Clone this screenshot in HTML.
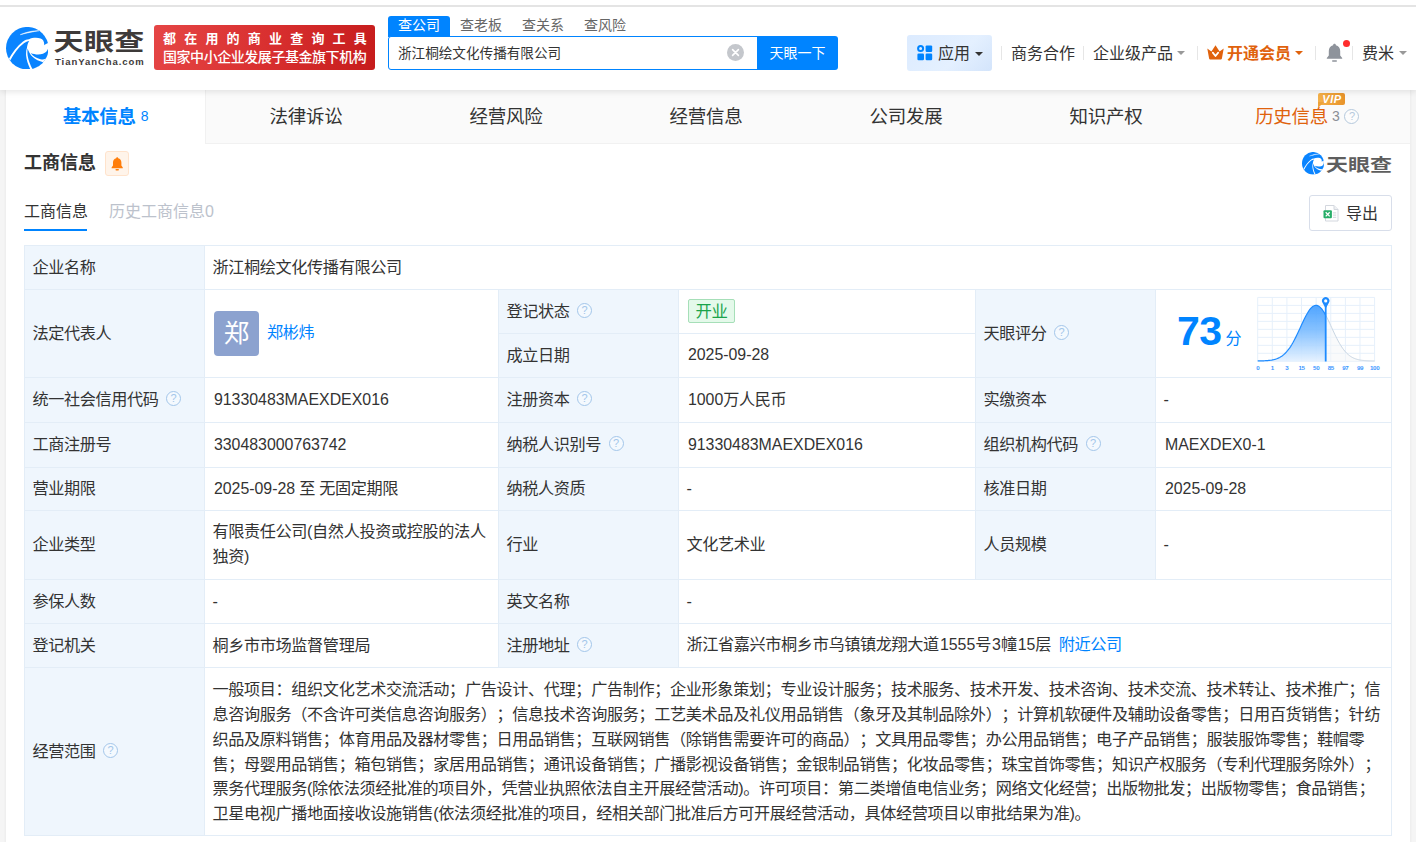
<!DOCTYPE html>
<html lang="zh-CN">
<head>
<meta charset="utf-8">
<title>浙江桐绘文化传播有限公司 - 天眼查</title>
<style>
*{box-sizing:border-box;margin:0;padding:0}
html,body{width:1416px;height:842px;overflow:hidden}
body{background:#f5f5f5;font-family:"Liberation Sans","Noto Sans CJK SC",sans-serif;color:#333;font-size:16px;position:relative}
a{text-decoration:none;color:#0084ff}
.abs{position:absolute}
/* top */
#topstrip{position:absolute;left:0;top:0;width:1416px;height:5px;background:#fff}
#topline{position:absolute;left:0;top:5px;width:1416px;height:2px;background:#e4e4e4;z-index:6}
#header{position:absolute;left:0;top:0;width:1416px;height:90px;background:#fff;box-shadow:0 2px 6px rgba(0,0,0,.10);z-index:5}

/* header pieces */
#logoTxt{position:absolute;left:53.5px;top:21.3px;font-size:30px;font-weight:bold;color:#3e3a39;line-height:42px;letter-spacing:.4px;transform-origin:0 50%;transform:scale(1,.805);white-space:nowrap}
#logoSub{position:absolute;left:55px;top:56.2px;font-size:9.5px;font-weight:bold;color:#3e3a39;letter-spacing:.95px;line-height:12px;white-space:nowrap}
#banner{position:absolute;left:154px;top:25px;width:221px;height:45px;border-radius:3px;background:linear-gradient(100deg,#e54545 0%,#d93030 50%,#c61c1c 100%);color:#fff;font-weight:bold;white-space:nowrap}
#banner .b1{position:absolute;left:9px;top:6px;font-size:13px;line-height:16px;letter-spacing:8.2px}
#banner .b2{position:absolute;left:9px;top:24.3px;font-size:14px;line-height:17px;letter-spacing:-.45px;font-weight:500}
.stab{position:absolute;top:16px;height:21px;line-height:19px;font-size:14px;color:#666;white-space:nowrap}
#stab1{left:388px;width:62px;background:#0084ff;color:#fff;text-align:center;border-radius:3px 3px 0 0}
#sbox{position:absolute;left:388px;top:36px;width:370px;height:34px;border:1px solid #0084ff;border-radius:3px 0 0 3px;background:#fff;font-size:13.6px;line-height:34px;padding-left:9px;color:#333;white-space:nowrap}
#sbtn{position:absolute;left:757px;top:36px;width:81px;height:34px;background:#0084ff;color:#fff;font-size:14px;line-height:35px;text-align:center;border-radius:0 3px 3px 0}
#sclr{position:absolute;left:727px;top:44px;width:17px;height:17px;border-radius:50%;background:#c4c7cc}
.hn{position:absolute;top:42px;height:24px;line-height:24px;font-size:16px;color:#333;white-space:nowrap}
.hsep{position:absolute;top:46px;width:1px;height:14px;background:#e6e6e6}
.car{position:absolute;width:0;height:0;border-left:4.5px solid transparent;border-right:4.5px solid transparent;border-top:4.5px solid #999}
#app{position:absolute;left:907px;top:35px;width:85px;height:36px;border-radius:3px;background:linear-gradient(135deg,#dcebff 0%,#e4f0ff 60%,#d3e4fb 100%)}
/* container */
#wrap{position:absolute;left:6px;top:90px;width:1404px;height:760px;background:#fff;box-shadow:0 0 3px rgba(0,0,0,.07)}
#nav{position:absolute;left:0;top:0;width:1404px;height:54px;background:#fafafa;border-bottom:1px solid #f1f1f1}
.nt{position:absolute;top:0;height:54px;line-height:53.5px;font-size:18.5px;letter-spacing:-.3px;color:#333;text-align:center;white-space:nowrap}
.nt.on{background:#fff;color:#0084ff;font-weight:bold;border-right:1px solid #f1f1f1}

#vip{position:absolute;left:1312px;top:3px;width:27px;height:12px;border-radius:2px;background:linear-gradient(90deg,#f4b14a,#e8932a);color:#fff;font:italic bold 11px/12px "Liberation Sans",sans-serif;text-align:center;letter-spacing:.6px;text-indent:1px}
#vip:after{content:"";position:absolute;left:0;top:9px;border-top:6px solid #eda23a;border-right:6px solid transparent}
#stitle{position:absolute;left:18px;top:61px;font-size:18px;font-weight:bold;color:#333;line-height:24px;white-space:nowrap}
#sbell{position:absolute;left:99px;top:61px;width:24px;height:25px;border:1px solid #ffe3cc;background:#fff4ea;border-radius:3px}
.sub{position:absolute;top:110px;font-size:16px;line-height:24px;white-space:nowrap}
#subline{position:absolute;left:18px;top:138.5px;width:63px;height:2px;background:#0084ff}
#exp{position:absolute;left:1303px;top:105px;width:83px;height:36px;border:1px solid #d8deea;border-radius:3px;background:#fff}
#exp span{position:absolute;left:36px;top:6px;font-size:16px;line-height:24px;color:#333}
#wm{position:absolute;left:1320px;top:62.5px;font-size:22px;font-weight:bold;color:#5e5e5e;line-height:24px;white-space:nowrap;transform-origin:0 50%;transform:scale(1,.8)}
/* table */
#tb{position:absolute;left:18px;top:155px;width:1368px;height:591px;border-top:1px solid #e3edf7;border-left:1px solid #e3edf7}
.c{position:absolute;border-right:1px solid #e3edf7;border-bottom:1px solid #e3edf7;background:#fff;font-size:16.15px;letter-spacing:-.36px;color:#333;padding-left:7.4px;padding-bottom:2px;line-height:24px;text-spacing-trim:space-all;display:flex;align-items:center;white-space:nowrap}
.c.l{background:#eff6fd}
.q{display:inline-block;width:15px;height:15px;border:1px solid #a3c6ea;border-radius:50%;margin-left:7.5px;font-size:11px;line-height:13px;text-align:center;color:#a3c6ea;background:rgba(255,255,255,.35);font-family:"Liberation Sans",sans-serif;letter-spacing:0;vertical-align:middle;position:relative;top:-2px}

.n{font-size:15.9px;letter-spacing:0;margin-left:1.5px}
.m1{margin-left:1px}
.av{position:absolute;left:9px;top:21px;width:45px;height:45px;border-radius:4px;background:#8ca2cf;color:#fff;font-size:25.5px;line-height:45px;text-align:center;letter-spacing:0}
.nm{position:absolute;left:62px;top:30px;color:#0084ff;line-height:24px}
.tag{display:inline-block;height:24px;line-height:22px;padding:0 6.5px 0 6.5px;border:1px solid #a6dfb8;background:#e4f9ea;color:#1aa34a;border-radius:2px;font-size:16.4px;letter-spacing:-.3px;margin-left:1.6px;position:relative;top:.5px}
.ml{display:block;line-height:24.8px;white-space:nowrap}
.sc{padding-top:9.3px}
</style>
</head>
<body>
<div id="topstrip"></div>
<div id="topline"></div>
<div id="header">
  <svg class="abs" style="left:5.7px;top:26.7px" width="42.5" height="42.5" viewBox="0 0 42.5 42.5"><defs><clipPath id="lgc"><circle cx="21.25" cy="21.2" r="21.25"/></clipPath></defs>
<g clip-path="url(#lgc)">
<rect x="0" y="0" width="43" height="43" fill="#0a84ff"/>
<path d="M14.3 7.7 C20 5 27 3.6 33 3.7 C27.5 4.6 20.5 6 14.3 7.7Z" fill="#fff" stroke="#fff" stroke-width=".5" stroke-linejoin="round"/>
<path d="M2.6 32.2 C6.5 25 11 19 17 14.4 C19 12.9 21 12.4 23 12.2 C26 10.8 31 10.4 34.6 11.5 C37.2 12.5 38.6 15 38.1 18.3 L39.5 17.2 L44 15 L44 44 L25.2 44 C22.8 39.5 20.6 34 20.1 28.5 C19.9 25.5 20.2 23 20.9 21 C21.2 18.5 21.9 16 23.2 14 C21.5 14.3 19.5 15 17.9 16.2 C12 20.6 8 26.5 4.2 33.4Z" fill="#fff"/>
<path d="M42.3 19.6 C42.3 23 40.5 25.6 37 26.8 C33 28 28.5 27.6 24.6 26 C27 29.2 30.5 31.4 34.5 32.2 C37 32.7 39 32.4 41 31.6 L44 30 L44 19Z" fill="#0a84ff"/>
<path d="M21.6 21.4 C22.6 24.5 24.2 27.6 26.8 30 C29.6 32.6 33 34.2 37.2 35.2 L38 37 L30 44 L27 43 C24.6 39 22.6 34 21.7 29 C21.3 26.4 21.3 24 21.6 21.4Z" fill="#0a84ff"/>
</g>
</svg>
  <div id="logoTxt">天眼查</div>
  <div id="logoSub">TianYanCha.com</div>
  <div id="banner"><div class="b1">都在用的商业查询工具</div><div class="b2">国家中小企业发展子基金旗下机构</div></div>
  <div class="stab" id="stab1">查公司</div>
  <div class="stab" style="left:460px">查老板</div>
  <div class="stab" style="left:522px">查关系</div>
  <div class="stab" style="left:584px">查风险</div>
  <div id="sbox">浙江桐绘文化传播有限公司</div>
  <div id="sclr"><svg width="17" height="17" viewBox="0 0 17 17"><path d="M5.6 5.6 L11.4 11.4 M11.4 5.6 L5.6 11.4" stroke="#fff" stroke-width="1.6" stroke-linecap="round"/></svg></div>
  <div id="sbtn">天眼一下</div>
  <div id="app"></div>
  <svg class="abs" style="left:917px;top:45px" width="16" height="16" viewBox="0 0 16 16"><circle cx="3.6" cy="3.6" r="2.5" fill="none" stroke="#0084ff" stroke-width="2"/><rect x="8.6" y=".4" width="6.6" height="6.6" rx="1.2" fill="#0084ff"/><rect x=".4" y="8.6" width="6.6" height="6.6" rx="1.2" fill="#0084ff"/><rect x="8.6" y="8.6" width="6.6" height="6.6" rx="1.2" fill="#0084ff"/></svg>
  <div class="hn" style="left:938px">应用</div>
  <div class="car" style="left:974.5px;top:51.5px;border-top-color:#333"></div>
  <div class="hsep" style="left:1001px"></div>
  <div class="hn" style="left:1011px">商务合作</div>
  <div class="hsep" style="left:1083px"></div>
  <div class="hn" style="left:1093px">企业级产品</div>
  <div class="car" style="left:1177px;top:50.5px"></div>
  <div class="hsep" style="left:1197px"></div>
  <svg class="abs" style="left:1207px;top:45px" width="17" height="15" viewBox="0 0 17 15"><path d="M.3 3.6 L4.4 6.4 L8.5 .2 L12.6 6.4 L16.7 3.6 L15 13 C14.9 14 14.2 14.6 13.3 14.6 L3.7 14.6 C2.8 14.6 2.1 14 2 13Z" fill="#e0620d"/><path d="M5.8 7.6 L8.5 11 L11.2 7.6" fill="none" stroke="#fff" stroke-width="1.7" stroke-linecap="round" stroke-linejoin="round"/></svg>
  <div class="hn" style="left:1227px;color:#e0620d;font-weight:bold">开通会员</div>
  <div class="car" style="left:1295px;top:50.5px;border-top-color:#e0620d"></div>
  <div class="hsep" style="left:1315px"></div>
  <svg class="abs" style="left:1326px;top:43px" width="17" height="20" viewBox="0 0 17 20"><path d="M8.5 .8 C9.3 .8 9.9 1.4 9.9 2.2 C12.6 2.9 14.2 5.2 14.2 8 L14.2 12.4 L16.2 15 L16.2 15.8 L.8 15.8 L.8 15 L2.8 12.4 L2.8 8 C2.8 5.2 4.4 2.9 7.1 2.2 C7.1 1.4 7.7 .8 8.5 .8Z" fill="#8e939b"/><rect x="6" y="17.2" width="5" height="1.6" rx=".8" fill="#8e939b"/></svg>
  <div class="abs" style="left:1342.8px;top:39.5px;width:7px;height:7px;border-radius:50%;background:#ff2d2d"></div>
  <div class="hsep" style="left:1352px"></div>
  <div class="hn" style="left:1362px">费米</div>
  <div class="car" style="left:1399px;top:50.5px"></div>
</div>
<div id="wrap">
  <div id="nav">
    <div class="nt on" style="left:0;width:200px">基本信息<span style="font-weight:normal;font-size:14px;margin-left:5px;position:relative;top:-2px">8</span></div>
    <div class="nt" style="left:200px;width:200px">法律诉讼</div>
    <div class="nt" style="left:400px;width:200px">经营风险</div>
    <div class="nt" style="left:600px;width:200px">经营信息</div>
    <div class="nt" style="left:800px;width:200px">公司发展</div>
    <div class="nt" style="left:1000px;width:200px">知识产权</div>
    <div class="nt" style="left:1201.3px;width:200px;color:#e0620d">历史信息<span style="font-size:14px;color:#8a8f96;margin-left:4px;position:relative;top:-2px">3</span><span class="q" style="width:15px;height:15px;margin-left:5px;position:relative;top:-2px;border-color:#b5c9dd;color:#b5c9dd;line-height:13px">?</span></div>
    <div id="vip">VIP</div>
  </div>
  <div id="sec">
    <div id="stitle">工商信息</div>
    <div id="sbell"><svg class="abs" style="left:5px;top:4.5px" width="12.4" height="14" viewBox="0 0 11 13"><path d="M5.5 .3 C6 .3 6.4 .7 6.4 1.2 C8.3 1.7 9.4 3.3 9.4 5.2 L9.4 8 L10.7 9.8 L10.7 10.4 L.3 10.4 L.3 9.8 L1.6 8 L1.6 5.2 C1.6 3.3 2.7 1.7 4.6 1.2 C4.6 .7 5 .3 5.5 .3Z" fill="#ff7d0a"/><rect x="3.9" y="11.2" width="3.2" height="1.3" rx=".65" fill="#ff7d0a"/></svg></div>
    <svg class="abs" style="left:1296px;top:62px" width="22" height="22.6" viewBox="0 0 42.5 42.5" preserveAspectRatio="none"><defs><clipPath id="lgc2"><circle cx="21.25" cy="21.2" r="21.25"/></clipPath></defs>
<g clip-path="url(#lgc2)">
<rect x="0" y="0" width="43" height="43" fill="#0a84ff"/>
<path d="M14.3 7.7 C20 5 27 3.6 33 3.7 C27.5 4.6 20.5 6 14.3 7.7Z" fill="#fff" stroke="#fff" stroke-width=".5" stroke-linejoin="round"/>
<path d="M2.6 32.2 C6.5 25 11 19 17 14.4 C19 12.9 21 12.4 23 12.2 C26 10.8 31 10.4 34.6 11.5 C37.2 12.5 38.6 15 38.1 18.3 L39.5 17.2 L44 15 L44 44 L25.2 44 C22.8 39.5 20.6 34 20.1 28.5 C19.9 25.5 20.2 23 20.9 21 C21.2 18.5 21.9 16 23.2 14 C21.5 14.3 19.5 15 17.9 16.2 C12 20.6 8 26.5 4.2 33.4Z" fill="#fff"/>
<path d="M42.3 19.6 C42.3 23 40.5 25.6 37 26.8 C33 28 28.5 27.6 24.6 26 C27 29.2 30.5 31.4 34.5 32.2 C37 32.7 39 32.4 41 31.6 L44 30 L44 19Z" fill="#0a84ff"/>
<path d="M21.6 21.4 C22.6 24.5 24.2 27.6 26.8 30 C29.6 32.6 33 34.2 37.2 35.2 L38 37 L30 44 L27 43 C24.6 39 22.6 34 21.7 29 C21.3 26.4 21.3 24 21.6 21.4Z" fill="#0a84ff"/>
</g>
</svg>
    <div id="wm">天眼查</div>
    <div class="sub" style="left:18px;color:#333">工商信息</div>
    <div class="sub" style="left:103px;color:#bcc2cc">历史工商信息0</div>
    <div id="subline"></div>
    <div id="exp"><svg class="abs" style="left:13px;top:9px" width="16" height="17" viewBox="0 0 16 17"><path d="M2.5 .5 L11 .5 L15 4.5 L15 16 L2.5 16Z" fill="#fff" stroke="#d3d7de" stroke-width="1"/><path d="M11 .5 L11 4.5 L15 4.5" fill="#eef0f3" stroke="#d3d7de" stroke-width="1"/><rect x="10" y="7.4" width="3.2" height="1" fill="#cfd4da"/><rect x="10" y="9.6" width="3.2" height="1" fill="#cfd4da"/><rect x="10" y="11.8" width="3.2" height="1" fill="#cfd4da"/><rect x=".5" y="5.3" width="8.4" height="8" rx="1" fill="#27ae68"/><path d="M2.7 7.2 L6.7 11.4 M6.7 7.2 L2.7 11.4" stroke="#fff" stroke-width="1.3"/></svg><span>导出</span></div>
  </div>
  <div id="tb">
<div class="c l" style="left:0px;top:0px;width:180px;height:44px;"><span class="t">企业名称</span></div>
<div class="c " style="left:180px;top:0px;width:1187px;height:44px;"><span class="t">浙江桐绘文化传播有限公司</span></div>
<div class="c l" style="left:0px;top:44px;width:180px;height:88px;"><span class="t">法定代表人</span></div>
<div class="c " style="left:180px;top:44px;width:294px;height:88px;"><span class="av">郑</span><a class="nm">郑彬炜</a></div>
<div class="c l" style="left:474px;top:44px;width:180px;height:44px;"><span class="t">登记状态<span class="q">?</span></span></div>
<div class="c " style="left:654px;top:44px;width:297px;height:44px;"><span class="t"><span class="tag">开业</span></span></div>
<div class="c l" style="left:474px;top:88px;width:180px;height:44px;"><span class="t">成立日期</span></div>
<div class="c " style="left:654px;top:88px;width:297px;height:44px;"><span class="t"><span class="n">2025-09-28</span></span></div>
<div class="c l" style="left:951px;top:44px;width:180px;height:88px;"><span class="t">天眼评分<span class="q">?</span></span></div>
<div class="c " style="left:1131px;top:44px;width:236px;height:88px;padding:0"><svg class="abs" style="left:0;top:0" width="236" height="87" viewBox="0 0 236 87">
<defs><linearGradient id="bg1" x1="0" y1="0" x2="0" y2="1"><stop offset="0" stop-color="#3d9bff"/><stop offset=".45" stop-color="#7bbcff"/><stop offset="1" stop-color="#e4f1ff"/></linearGradient></defs>
<g stroke="#e6f0fb" stroke-width="1"><line x1="101.7" y1="7.4" x2="101.7" y2="71.3"/><line x1="116.31" y1="7.4" x2="116.31" y2="71.3"/><line x1="130.92" y1="7.4" x2="130.92" y2="71.3"/><line x1="145.54" y1="7.4" x2="145.54" y2="71.3"/><line x1="160.15" y1="7.4" x2="160.15" y2="71.3"/><line x1="174.76" y1="7.4" x2="174.76" y2="71.3"/><line x1="189.38" y1="7.4" x2="189.38" y2="71.3"/><line x1="203.99" y1="7.4" x2="203.99" y2="71.3"/><line x1="218.6" y1="7.4" x2="218.6" y2="71.3"/><line x1="101.7" y1="7.4" x2="218.6" y2="7.4"/><line x1="101.7" y1="15.39" x2="218.6" y2="15.39"/><line x1="101.7" y1="23.38" x2="218.6" y2="23.38"/><line x1="101.7" y1="31.36" x2="218.6" y2="31.36"/><line x1="101.7" y1="39.35" x2="218.6" y2="39.35"/><line x1="101.7" y1="47.34" x2="218.6" y2="47.34"/><line x1="101.7" y1="55.32" x2="218.6" y2="55.32"/><line x1="101.7" y1="63.31" x2="218.6" y2="63.31"/><line x1="101.7" y1="71.3" x2="218.6" y2="71.3"/></g>
<path d="M169.7 25.21 L170.7 27.11 L171.7 29.11 L172.7 31.18 L173.7 33.31 L174.7 35.47 L175.7 37.65 L176.7 39.83 L177.7 41.98 L178.7 44.1 L179.7 46.16 L180.7 48.17 L181.7 50.1 L182.7 51.94 L183.7 53.69 L184.7 55.35 L185.7 56.91 L186.7 58.37 L187.7 59.72 L188.7 60.97 L189.7 62.12 L190.7 63.17 L191.7 64.12 L192.7 64.98 L193.7 65.76 L194.7 66.45 L195.7 67.07 L196.7 67.62 L197.7 68.11 L198.7 68.53 L199.7 68.9 L200.7 69.23 L201.7 69.51 L202.7 69.75 L203.7 69.95 L204.7 70.13 L205.7 70.28 L206.7 70.4 L207.7 70.51 L208.7 70.6 L209.7 70.67 L210.7 70.74 L211.7 70.79 L212.7 70.83 L213.7 70.86 L214.7 70.89 L215.7 70.91 L216.7 70.93 L217.7 70.95 L218.6 70.96 L218.6 71.5 L169.7 71.5Z" fill="#f4f6f8" opacity=".5"/>
<path d="M169.7 25.21 L170.7 27.11 L171.7 29.11 L172.7 31.18 L173.7 33.31 L174.7 35.47 L175.7 37.65 L176.7 39.83 L177.7 41.98 L178.7 44.1 L179.7 46.16 L180.7 48.17 L181.7 50.1 L182.7 51.94 L183.7 53.69 L184.7 55.35 L185.7 56.91 L186.7 58.37 L187.7 59.72 L188.7 60.97 L189.7 62.12 L190.7 63.17 L191.7 64.12 L192.7 64.98 L193.7 65.76 L194.7 66.45 L195.7 67.07 L196.7 67.62 L197.7 68.11 L198.7 68.53 L199.7 68.9 L200.7 69.23 L201.7 69.51 L202.7 69.75 L203.7 69.95 L204.7 70.13 L205.7 70.28 L206.7 70.4 L207.7 70.51 L208.7 70.6 L209.7 70.67 L210.7 70.74 L211.7 70.79 L212.7 70.83 L213.7 70.86 L214.7 70.89 L215.7 70.91 L216.7 70.93 L217.7 70.95 L218.6 70.96" fill="none" stroke="#c9d6e3" stroke-width="1"/>
<path d="M101.7 70.95 L102.7 70.94 L103.7 70.92 L104.7 70.9 L105.7 70.88 L106.7 70.85 L107.7 70.81 L108.7 70.77 L109.7 70.71 L110.7 70.65 L111.7 70.57 L112.7 70.47 L113.7 70.36 L114.7 70.22 L115.7 70.06 L116.7 69.87 L117.7 69.66 L118.7 69.4 L119.7 69.1 L120.7 68.76 L121.7 68.37 L122.7 67.92 L123.7 67.41 L124.7 66.84 L125.7 66.19 L126.7 65.46 L127.7 64.65 L128.7 63.75 L129.7 62.76 L130.7 61.67 L131.7 60.48 L132.7 59.19 L133.7 57.8 L134.7 56.3 L135.7 54.7 L136.7 53.0 L137.7 51.21 L138.7 49.33 L139.7 47.37 L140.7 45.34 L141.7 43.26 L142.7 41.12 L143.7 38.96 L144.7 36.78 L145.7 34.61 L146.7 32.45 L147.7 30.35 L148.7 28.3 L149.7 26.34 L150.7 24.48 L151.7 22.74 L152.7 21.15 L153.7 19.72 L154.7 18.46 L155.7 17.4 L156.7 16.55 L157.7 15.91 L158.7 15.5 L159.7 15.31 L160.7 15.36 L161.7 15.63 L162.7 16.14 L163.7 16.86 L164.7 17.8 L165.7 18.94 L166.7 20.27 L167.7 21.77 L168.7 23.42 L169.7 25.21 L169.7 71.5 L101.7 71.5Z" fill="url(#bg1)" fill-opacity=".9"/>
<path d="M101.7 70.95 L102.7 70.94 L103.7 70.92 L104.7 70.9 L105.7 70.88 L106.7 70.85 L107.7 70.81 L108.7 70.77 L109.7 70.71 L110.7 70.65 L111.7 70.57 L112.7 70.47 L113.7 70.36 L114.7 70.22 L115.7 70.06 L116.7 69.87 L117.7 69.66 L118.7 69.4 L119.7 69.1 L120.7 68.76 L121.7 68.37 L122.7 67.92 L123.7 67.41 L124.7 66.84 L125.7 66.19 L126.7 65.46 L127.7 64.65 L128.7 63.75 L129.7 62.76 L130.7 61.67 L131.7 60.48 L132.7 59.19 L133.7 57.8 L134.7 56.3 L135.7 54.7 L136.7 53.0 L137.7 51.21 L138.7 49.33 L139.7 47.37 L140.7 45.34 L141.7 43.26 L142.7 41.12 L143.7 38.96 L144.7 36.78 L145.7 34.61 L146.7 32.45 L147.7 30.35 L148.7 28.3 L149.7 26.34 L150.7 24.48 L151.7 22.74 L152.7 21.15 L153.7 19.72 L154.7 18.46 L155.7 17.4 L156.7 16.55 L157.7 15.91 L158.7 15.5 L159.7 15.31 L160.7 15.36 L161.7 15.63 L162.7 16.14 L163.7 16.86 L164.7 17.8 L165.7 18.94 L166.7 20.27 L167.7 21.77 L168.7 23.42 L169.7 25.21" fill="none" stroke="#1e8bff" stroke-width="1.2"/>
<line x1="169.7" y1="16" x2="169.7" y2="71.5" stroke="#1e8bff" stroke-width="1.8"/>
<path d="M169.7 18.5 L166.5 12.8 A3.7 3.7 0 1 1 172.9 12.8Z" fill="#1e8bff"/>
<circle cx="169.7" cy="10.9" r="1.6" fill="#fff"/>
<g font-family="Liberation Sans, sans-serif" font-size="6.2" font-weight="bold" fill="#3d97ff"><text x="101.7" y="80" text-anchor="middle">0</text><text x="116.31" y="80" text-anchor="middle">1</text><text x="130.92" y="80" text-anchor="middle">3</text><text x="145.54" y="80" text-anchor="middle">15</text><text x="160.15" y="80" text-anchor="middle">50</text><text x="174.76" y="80" text-anchor="middle">85</text><text x="189.38" y="80" text-anchor="middle">97</text><text x="203.99" y="80" text-anchor="middle">99</text><text x="218.6" y="80" text-anchor="middle">100</text></g>
</svg>
<div class="abs" style="left:21px;top:17px;font:bold 41px/48px 'Liberation Sans',sans-serif;color:#0084ff;letter-spacing:-.5px">73</div>
<div class="abs" style="left:69.5px;top:37px;font-size:16px;line-height:24px;color:#0084ff;letter-spacing:0">分</div></div>
<div class="c l" style="left:0px;top:132px;width:180px;height:45px;"><span class="t">统一社会信用代码<span class="q">?</span></span></div>
<div class="c " style="left:180px;top:132px;width:294px;height:45px;"><span class="t"><span class="n">91330483MAEXDEX016</span></span></div>
<div class="c l" style="left:474px;top:132px;width:180px;height:45px;"><span class="t">注册资本<span class="q">?</span></span></div>
<div class="c " style="left:654px;top:132px;width:297px;height:45px;"><span class="t"><span class="n">1000</span>万人民币</span></div>
<div class="c l" style="left:951px;top:132px;width:180px;height:45px;"><span class="t">实缴资本</span></div>
<div class="c " style="left:1131px;top:132px;width:236px;height:45px;"><span class="t">-</span></div>
<div class="c l" style="left:0px;top:177px;width:180px;height:45px;"><span class="t">工商注册号</span></div>
<div class="c " style="left:180px;top:177px;width:294px;height:45px;"><span class="t"><span class="n">330483000763742</span></span></div>
<div class="c l" style="left:474px;top:177px;width:180px;height:45px;"><span class="t">纳税人识别号<span class="q">?</span></span></div>
<div class="c " style="left:654px;top:177px;width:297px;height:45px;"><span class="t"><span class="n">91330483MAEXDEX016</span></span></div>
<div class="c l" style="left:951px;top:177px;width:180px;height:45px;"><span class="t">组织机构代码<span class="q">?</span></span></div>
<div class="c " style="left:1131px;top:177px;width:236px;height:45px;"><span class="t"><span class="n">MAEXDEX0-1</span></span></div>
<div class="c l" style="left:0px;top:222px;width:180px;height:43px;"><span class="t">营业期限</span></div>
<div class="c " style="left:180px;top:222px;width:294px;height:43px;"><span class="t"><span class="n">2025-09-28</span> 至 无固定期限</span></div>
<div class="c l" style="left:474px;top:222px;width:180px;height:43px;"><span class="t">纳税人资质</span></div>
<div class="c " style="left:654px;top:222px;width:297px;height:43px;"><span class="t">-</span></div>
<div class="c l" style="left:951px;top:222px;width:180px;height:43px;"><span class="t">核准日期</span></div>
<div class="c " style="left:1131px;top:222px;width:236px;height:43px;"><span class="t"><span class="n">2025-09-28</span></span></div>
<div class="c l" style="left:0px;top:265px;width:180px;height:69px;"><span class="t">企业类型</span></div>
<div class="c " style="left:180px;top:265px;width:294px;height:69px;"><span class="ml" style="line-height:25.3px;position:relative;top:.4px">有限责任公司(自然人投资或控股的法人<br>独资)</span></div>
<div class="c l" style="left:474px;top:265px;width:180px;height:69px;"><span class="t">行业</span></div>
<div class="c " style="left:654px;top:265px;width:297px;height:69px;"><span class="t">文化艺术业</span></div>
<div class="c l" style="left:951px;top:265px;width:180px;height:69px;"><span class="t">人员规模</span></div>
<div class="c " style="left:1131px;top:265px;width:236px;height:69px;"><span class="t">-</span></div>
<div class="c l" style="left:0px;top:334px;width:180px;height:44px;"><span class="t">参保人数</span></div>
<div class="c " style="left:180px;top:334px;width:294px;height:44px;"><span class="t">-</span></div>
<div class="c l" style="left:474px;top:334px;width:180px;height:44px;"><span class="t">英文名称</span></div>
<div class="c " style="left:654px;top:334px;width:713px;height:44px;"><span class="t">-</span></div>
<div class="c l" style="left:0px;top:378px;width:180px;height:44px;"><span class="t">登记机关</span></div>
<div class="c " style="left:180px;top:378px;width:294px;height:44px;"><span class="t">桐乡市市场监督管理局</span></div>
<div class="c l" style="left:474px;top:378px;width:180px;height:44px;"><span class="t">注册地址<span class="q">?</span></span></div>
<div class="c " style="left:654px;top:378px;width:713px;height:44px;"><span class="t">浙江省嘉兴市桐乡市乌镇镇龙翔大道<span class="n m1">1555</span>号<span class="n m1">3</span>幢<span class="n m1">15</span>层<a style="margin-left:7.5px">附近公司</a></span></div>
<div class="c l" style="left:0px;top:422px;width:180px;height:168px;"><span class="t">经营范围<span class="q">?</span></span></div>
<div class="c " style="left:180px;top:422px;width:1187px;height:168px;align-items:flex-start"><span class="ml sc">一般项目：组织文化艺术交流活动；广告设计、代理；广告制作；企业形象策划；专业设计服务；技术服务、技术开发、技术咨询、技术交流、技术转让、技术推广；信<br>息咨询服务（不含许可类信息咨询服务）；信息技术咨询服务；工艺美术品及礼仪用品销售（象牙及其制品除外）；计算机软硬件及辅助设备零售；日用百货销售；针纺<br>织品及原料销售；体育用品及器材零售；日用品销售；互联网销售（除销售需要许可的商品）；文具用品零售；办公用品销售；电子产品销售；服装服饰零售；鞋帽零<br>售；母婴用品销售；箱包销售；家居用品销售；通讯设备销售；广播影视设备销售；金银制品销售；化妆品零售；珠宝首饰零售；知识产权服务（专利代理服务除外）；<br>票务代理服务(除依法须经批准的项目外，凭营业执照依法自主开展经营活动)。许可项目：第二类增值电信业务；网络文化经营；出版物批发；出版物零售；食品销售；<br>卫星电视广播地面接收设施销售(依法须经批准的项目，经相关部门批准后方可开展经营活动，具体经营项目以审批结果为准)。</span></div>
</div><!--/tb-->
</div>
</body>
</html>
